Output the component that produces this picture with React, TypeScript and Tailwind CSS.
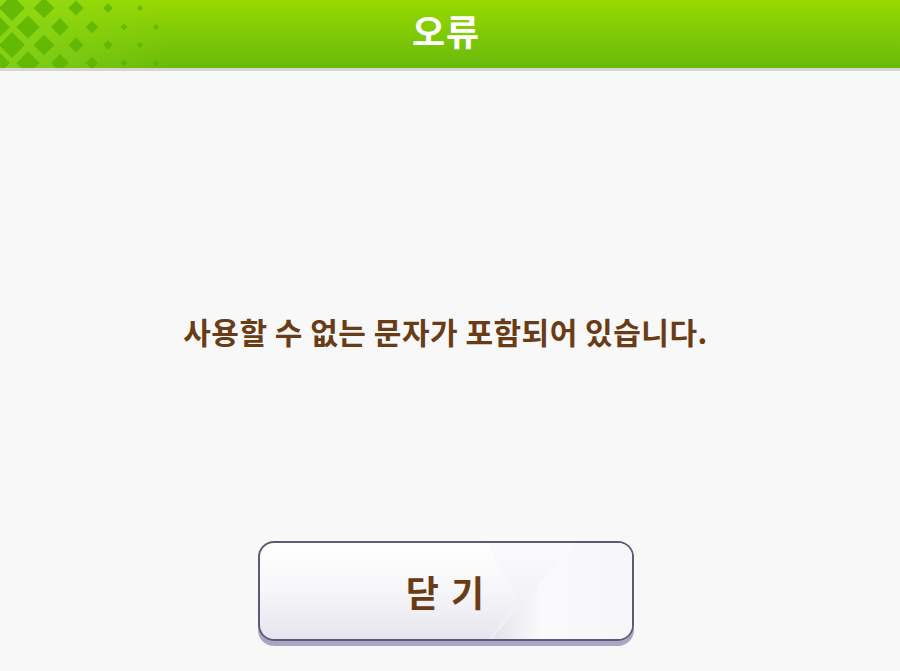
const KR = '"Noto Sans CJK KR", "Noto Sans", sans-serif'

// lattice of diamonds on the header's left edge, shrinking to the right
function HeaderPattern() {
  const rows = [8, 27, 45, 63]
  const items: { x: number; y: number; r: number }[] = []
  rows.forEach((y, ri) => {
    for (let i = 0; i < 6; i++) {
      const x = 12 + i * 32 + (ri % 2 === 1 ? 16 : 0)
      const r = Math.max(3, 14 - 0.085 * x)
      if (x < 170) items.push({ x, y, r })
    }
    if (ri % 2 === 1) items.push({ x: -4, y, r: 14 })
  })
  return (
    <svg className="absolute left-0 top-0" width="200" height="68" viewBox="0 0 200 68">
      <defs>
        <linearGradient id="lat" x1="0" y1="0" x2="1" y2="0">
          <stop offset="0" stopColor="#8ed81c" stopOpacity="0.7" />
          <stop offset="0.85" stopColor="#8ed81c" stopOpacity="0" />
        </linearGradient>
      </defs>
      <rect x="0" y="0" width="200" height="68" fill="url(#lat)" />
      {items.map((d, i) => (
        <polygon
          key={i}
          points={`${d.x},${d.y - d.r} ${d.x + d.r},${d.y} ${d.x},${d.y + d.r} ${d.x - d.r},${d.y}`}
          fill="#5bb300"
          opacity={0.8}
        />
      ))}
    </svg>
  )
}

function ButtonSheen() {
  return (
    <svg className="absolute inset-0" width="100%" height="100%" viewBox="0 0 372 96" preserveAspectRatio="none">
      <defs>
        <linearGradient id="sheenL" x1="0" y1="0" x2="0" y2="1">
          <stop offset="0" stopColor="#fbfbfd" />
          <stop offset="1" stopColor="#ececf2" />
        </linearGradient>
        <linearGradient id="sheenR" x1="0" y1="0" x2="1" y2="0">
          <stop offset="0" stopColor="#e2e2ea" />
          <stop offset="0.35" stopColor="#fafafc" />
          <stop offset="1" stopColor="#f6f6f9" />
        </linearGradient>
      </defs>
      <polygon points="227,0 257,55 229,96 232,96 315,0" fill="url(#sheenL)" />
      <polygon points="315,0 372,0 372,96 232,96" fill="url(#sheenR)" />
    </svg>
  )
}

export default function App() {
  return (
    <div className="flex h-[671px] w-[900px] flex-col overflow-hidden bg-[#f8f8f8]" style={{ fontFamily: KR }}>

      {/* Header */}
      <div className="relative flex h-[71px] shrink-0 items-start justify-center border-b-[3px] border-[#d5d8d2] bg-gradient-to-b from-[#97d900] to-[#68ba0b]">
        <HeaderPattern />
        <h1 className="relative ml-[-8px] mt-[6px] text-[36px] font-bold leading-[48px] tracking-[1px] text-white">
          오류
        </h1>
      </div>

      {/* Message */}
      <div className="flex h-[470px] shrink-0 items-center justify-center pt-[50px]">
        <p className="ml-[-9px] text-[30px] font-bold leading-[34px] tracking-[0.5px] text-[#6a3c16]">
          사용할 수 없는 문자가 포함되어 있습니다.
        </p>
      </div>

      {/* Close button */}
      <div className="flex justify-center">
        <button className="relative ml-[-8px] flex h-[100px] w-[376px] items-center justify-center overflow-hidden rounded-[16px] border-2 border-[#5c5a77] bg-gradient-to-b from-[#ffffff] via-[#f6f6f9] to-[#e6e5ee] shadow-[0_5px_0_#a9a6c3]">
          <ButtonSheen />
          <span className="relative text-[36px] font-bold leading-[40px] tracking-[2px] text-[#6a3c16]">
            닫 기
          </span>
        </button>
      </div>

    </div>
  )
}
